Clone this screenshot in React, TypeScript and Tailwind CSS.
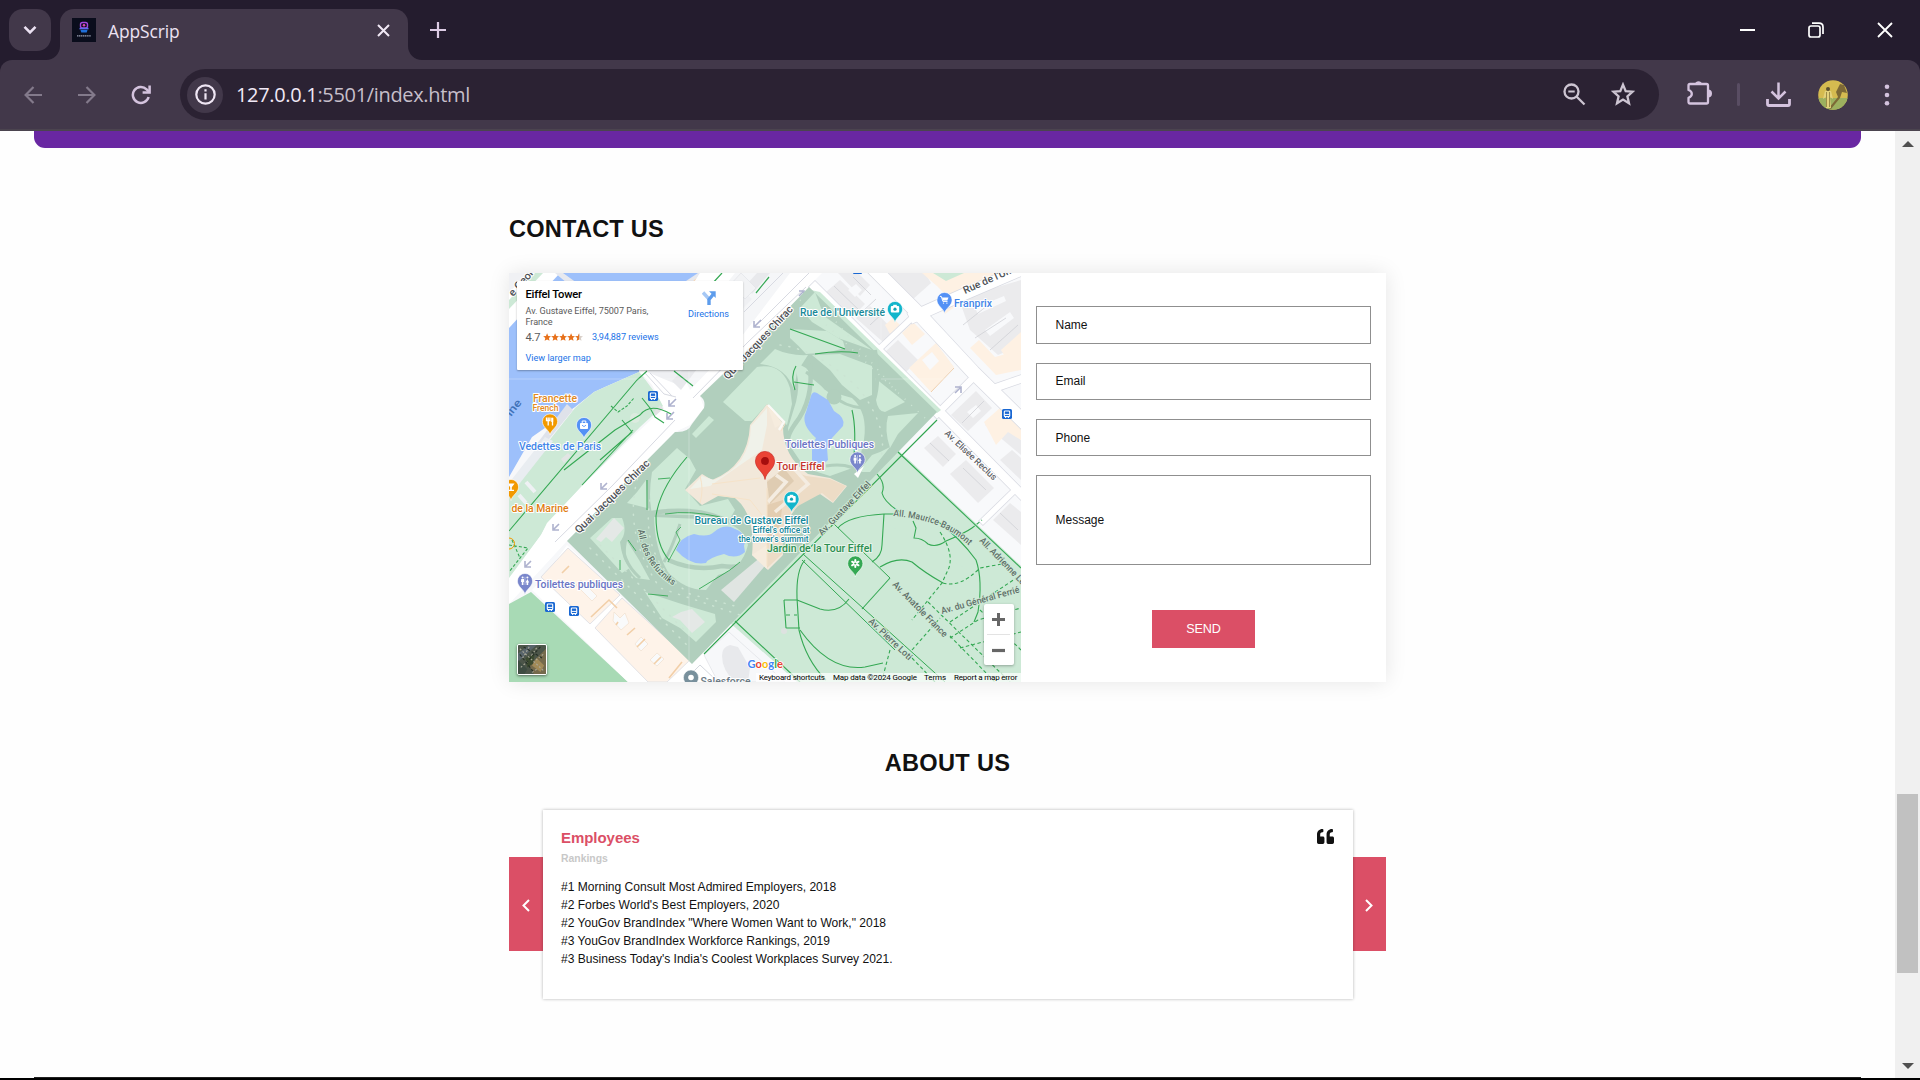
import React from "react";
import { FaQuoteLeft } from "react-icons/fa";

/* ---------- Browser chrome ---------- */

function TabStrip() {
  return (
    <div className="relative flex h-[60px] w-full items-start bg-[#241c2e]">
      <button className="ml-[9px] mt-[9px] flex h-[42px] w-[42px] items-center justify-center rounded-[14px] bg-[#42384a]">
        <svg width="14" height="10" viewBox="0 0 14 10" fill="none" stroke="#ece2f3" strokeWidth="2.6">
          <path d="M1.5 1.8 L7 7.3 L12.5 1.8" />
        </svg>
      </button>
      <div className="relative ml-[9px] mt-[9px] flex h-[51px] w-[348px] items-start rounded-t-[14px] bg-[#42384a]">
        <svg className="absolute -left-[14px] bottom-0" width="14" height="14" viewBox="0 0 14 14">
          <path d="M14 0 V14 H0 A14 14 0 0 0 14 0Z" fill="#42384a" />
        </svg>
        <svg className="absolute -right-[14px] bottom-0" width="14" height="14" viewBox="0 0 14 14">
          <path d="M0 0 V14 H14 A14 14 0 0 1 0 0Z" fill="#42384a" />
        </svg>
        <svg className="ml-3 mt-[9px]" width="24" height="24" viewBox="0 0 24 24">
          <rect width="24" height="24" fill="#0a0d1c" />
          <rect x="8.5" y="4.5" width="7" height="5.5" rx="2" fill="none" stroke="#a546e0" strokeWidth="1.4" />
          <circle cx="12" cy="7.3" r="1.3" fill="#e04bb4" />
          <path d="M7.5 10.6 H16.5" stroke="#5a6cf0" strokeWidth="1.6" />
          <path d="M8.5 12 L9.3 14.6 H14.7 L15.5 12Z" fill="#1f6fd8" />
          <path d="M5 17.8 H19" stroke="#9ba1b3" strokeWidth="1.2" strokeDasharray="1.4 0.5" />
        </svg>
        <span className="ml-3 mt-[9px] font-['Open_Sans','Noto_Sans',sans-serif] text-[17.4px] leading-[26px] tracking-[-0.1px] text-[#ece2f3]">
          AppScrip
        </span>
        <svg className="ml-auto mr-[18px] mt-[15px]" width="13" height="13" viewBox="0 0 13 13" stroke="#f0e8f5" strokeWidth="2">
          <path d="M1 1 L12 12 M12 1 L1 12" />
        </svg>
      </div>
      <svg className="ml-[22px] mt-[22px]" width="16" height="16" viewBox="0 0 16 16" stroke="#dccbe4" strokeWidth="2.2">
        <path d="M8 0 V16 M0 8 H16" />
      </svg>
      <div className="ml-auto flex h-[60px] items-center pr-[27px]">
        <svg width="15" height="15" viewBox="0 0 15 15" stroke="#fff" strokeWidth="2">
          <path d="M0 7 H15" />
        </svg>
        <svg className="ml-[53px]" width="16" height="16" viewBox="0 0 16 16" fill="none" stroke="#fff" strokeWidth="1.7">
          <rect x="1" y="4" width="11" height="11" rx="2" />
          <path d="M4 1.2 H11 Q15 1.2 15 5 V12" />
        </svg>
        <svg className="ml-[53px]" width="16" height="16" viewBox="0 0 16 16" stroke="#fff" strokeWidth="1.8">
          <path d="M1 1 L15 15 M15 1 L1 15" />
        </svg>
      </div>
    </div>
  );
}

function Toolbar() {
  return (
    <div className="h-[71px] w-full bg-[#241c2e]">
      <div className="flex h-[71px] w-full items-start rounded-t-[12px] border-b-2 border-[#4b444f] bg-[#42384a] pt-[9px]">
        <div className="flex h-[51px] w-[180px] items-center pl-6">
          <svg width="18" height="18" viewBox="0 0 18 18" fill="none" stroke="#837a8b" strokeWidth="2.2">
            <path d="M18 9 H2 M9.5 1 L1.6 9 L9.5 17" />
          </svg>
          <svg className="ml-9" width="18" height="18" viewBox="0 0 18 18" fill="none" stroke="#837a8b" strokeWidth="2.2">
            <path d="M0 9 H16 M8.5 1 L16.4 9 L8.5 17" />
          </svg>
          <svg className="ml-[35px]" width="20" height="20" viewBox="0 0 20 20" fill="none" stroke="#d4c3de" strokeWidth="2.5">
            <path d="M17.6 12 A8 8 0 1 1 15.6 4.3 L18.3 7" />
            <path d="M18.6 0.6 V7.6 H11.6" />
          </svg>
        </div>
        <div className="flex h-[51px] w-[1479px] items-center rounded-full bg-[#2b2233]">
          <span className="ml-[7px] flex h-9 w-9 items-center justify-center rounded-full bg-[#42384a]">
            <svg width="21" height="21" viewBox="0 0 21 21" fill="none" stroke="#efe6f4" strokeWidth="2.2">
              <circle cx="10.5" cy="10.5" r="9.2" />
              <path d="M10.5 9.2 V15.5 M10.5 5.3 V7.5" />
            </svg>
          </span>
          <span className="ml-[13px] font-['Open_Sans','Noto_Sans',sans-serif] text-[20px] leading-[28px] tracking-[-0.33px] text-[#c6bfca]">
            <span className="text-[#f1e9f6]">127.0.0.1</span>:5501/index.html
          </span>
          <svg className="ml-auto" width="23" height="23" viewBox="0 0 23 23" fill="none" stroke="#cdc5d2" strokeWidth="2.3">
            <circle cx="8.5" cy="8.5" r="7" />
            <path d="M13.5 13.5 L21.5 21.5" />
            <path d="M5.3 8.5 H11.7" strokeWidth="2" />
          </svg>
          <svg className="-mt-px mr-6 ml-[25px]" width="24" height="24" viewBox="0 0 24 24" fill="none" stroke="#cdc5d2" strokeWidth="2.3">
            <path d="M12 2.6 L14.7 9.1 L21.6 9.7 L16.4 14.3 L18 21.2 L12 17.5 L6 21.2 L7.6 14.3 L2.4 9.7 L9.3 9.1Z" />
          </svg>
        </div>
        <div className="flex h-[51px] flex-1 items-center">
          <svg className="-mt-1 ml-[27px]" width="27" height="26" viewBox="0 0 27 26" fill="none">
            <path
              d="M4 4 H20.5 Q22 4 22 5.5 V22 Q22 23.5 20.5 23.5 H4 Q2.5 23.5 2.5 22 V17.8 Q5.8 16.5 5.8 14 Q5.8 11 2.5 10 V5.5 Q2.5 4 4 4Z"
              stroke="#d4c3de"
              strokeWidth="2.3"
              strokeLinejoin="round"
            />
            <path d="M9 4 A3.6 3.6 0 0 1 16 4Z M22 9.5 A4 4 0 0 1 22 17.5Z" fill="#d4c3de" />
          </svg>
          <span className="ml-[24px] h-[23px] w-[3px] rounded bg-[#594d63]" />
          <svg className="ml-[26px]" width="25" height="25" viewBox="0 0 25 25" fill="none" stroke="#d4c3de" strokeWidth="2.5">
            <path d="M12.5 0.5 V16 M5.5 9.5 L12.5 16.5 L19.5 9.5" />
            <path d="M1.5 17 V22 Q1.5 23.5 3 23.5 H22 Q23.5 23.5 23.5 22 V17" strokeWidth="2.8" />
          </svg>
          <Avatar />
          <svg className="ml-[36px]" width="6" height="22" viewBox="0 0 6 22" fill="#d4c3de">
            <circle cx="3" cy="2.8" r="2.3" />
            <circle cx="3" cy="11" r="2.3" />
            <circle cx="3" cy="19.2" r="2.3" />
          </svg>
        </div>
      </div>
    </div>
  );
}

function Avatar() {
  return (
    <svg className="ml-[27px]" width="30" height="30" viewBox="0 0 30 30">
      <defs>
        <clipPath id="avatar">
          <circle cx="15" cy="15" r="14.8" />
        </clipPath>
      </defs>
      <g clipPath="url(#avatar)">
        <rect width="30" height="30" fill="#d5bb50" />
        <rect y="18" width="30" height="12" fill="#9cb05f" />
        <path d="M18 12 L22 4 L26 5 L29 13 L24 12 L22 18 L13 29 L11 28 L20 17Z" fill="#7d6936" />
        <circle cx="10" cy="9" r="2" fill="#5b5030" />
        <path d="M7 11 H13 L15 19 L12 17 L13 28 H8 L8 17 L5 19Z" fill="#e3d27c" />
        <path d="M8.5 12 V27 M11.5 12 V27" stroke="#8a7a3a" strokeWidth="0.8" />
      </g>
    </svg>
  );
}

/* ---------- Map ---------- */

type PinProps = { x: number; y: number; color: string; kind: string };

function PinGlyph({ kind }: { kind: string }) {
  switch (kind) {
    case "camera":
      return (
        <g>
          <rect x="-4.2" y="-3" width="8.4" height="6.6" rx="1" fill="#fff" />
          <rect x="-1.8" y="-4.2" width="3.6" height="2" fill="#fff" />
          <circle r="1.6" cy="0.2" fill="#12a4b5" />
        </g>
      );
    case "cart":
      return (
        <g fill="#fff" stroke="#fff">
          <path d="M-4.6 -3.6 H-3.2 L-1.6 1.4 H3" fill="none" strokeWidth="1" />
          <path d="M-2.6 -2.6 H4 L2.8 0.6 H-1.6Z" stroke="none" />
          <circle cx="-1" cy="3.1" r="0.7" stroke="none" />
          <circle cx="2.4" cy="3.1" r="0.7" stroke="none" />
        </g>
      );
    case "wc":
      return (
        <g fill="#fff">
          <circle cx="-2.4" cy="-3.4" r="1" />
          <circle cx="2.4" cy="-3.4" r="1" />
          <path d="M-3.8 -2 H-1 L-0.9 1 H-1.6 V4 H-3.2 V1 H-4Z M2.4 -2 L4.2 1.6 H3.2 V4 H1.6 V1.6 H0.6Z" />
          <path d="M-0.2 -4.2 H0.2 V4 H-0.2Z" />
        </g>
      );
    case "food":
      return (
        <g stroke="#fff" fill="none" strokeWidth="1.3">
          <path d="M-1.8 -4 V4 M-3.5 -4 V-1 H-0.1 V-4 M2.5 4 V-3.6" />
          <path d="M2.2 -3.8 V0.4" strokeWidth="2" />
        </g>
      );
    case "bag":
      return (
        <g>
          <rect x="-4" y="-2" width="8" height="6" rx="0.8" fill="#fff" />
          <path d="M-1.8 -2 V-4 H1.8 V-2" fill="none" stroke="#fff" />
          <path d="M-2 0.2 Q0 3 2 0.2" fill="none" stroke="#4285f4" strokeWidth="0.8" />
        </g>
      );
    case "bar":
      return <path d="M-3.6 -3.6 H3.6 L0.8 0.2 V2.8 H3 V4 H-3 V2.8 H-0.8 V0.2Z" fill="#fff" />;
    case "flower":
      return (
        <g stroke="#fff" strokeWidth="2" strokeLinecap="round">
          <path d="M0 -1.8 V-3.6 M0 1.8 V3.6 M-1.6 -0.9 L-3.2 -1.8 M1.6 0.9 L3.2 1.8 M1.6 -0.9 L3.2 -1.8 M-1.6 0.9 L-3.2 1.8" />
        </g>
      );
    default:
      return <circle r="2.8" fill="#fff" />;
  }
}

function Pin({ x, y, color, kind }: PinProps) {
  return (
    <g transform={`translate(${x} ${y})`}>
      <path d="M0 13.5 C-1 8 -7.6 6 -7.6 0 A7.6 7.6 0 0 1 7.6 0 C7.6 6 1 8 0 13.5Z" fill={color} stroke="#fff" strokeWidth="0.6" />
      <PinGlyph kind={kind} />
    </g>
  );
}

function BusStop({ x, y }: { x: number; y: number }) {
  return (
    <g transform={`translate(${x} ${y})`}>
      <rect x="-5" y="-5" width="10" height="10" rx="1.6" fill="#1967d2" />
      <rect x="-2.7" y="-3" width="5.4" height="5.6" rx="0.8" fill="none" stroke="#fff" strokeWidth="1.1" />
      <path d="M-2.6 0.4 H2.6 M-2 3.4 H-1 M1 3.4 H2" stroke="#fff" strokeWidth="1" />
    </g>
  );
}

type LabelProps = {
  x: number;
  y: number;
  w: number;
  color: string;
  size?: number;
  rotate?: number;
  halo?: string;
  children: string;
};

function Label({ x, y, w, color, size = 10.2, rotate = 0, halo = "#ffffff", children }: LabelProps) {
  return (
    <text
      transform={`translate(${x} ${y}) rotate(${rotate})`}
      textLength={w}
      lengthAdjust="spacingAndGlyphs"
      fontSize={size}
      fill={color}
      stroke={halo}
      strokeWidth="2"
      strokeLinejoin="round"
      paintOrder="stroke"
      fontWeight="500"
    >
      {children}
    </text>
  );
}

function MapDrawing() {
  return (
    <svg className="block h-[409px] w-[512px] font-['Roboto',sans-serif]" viewBox="509 273 512 409">
      <rect x="509" y="273" width="512" height="409" fill="#f7f8fa" />

      {/* River and its far bank */}
      <path d="M509 273 H700 L639 372 L605 387 L594 392 L575 407 L532 437 L509 477Z" fill="#9dc0fb" />
      <path d="M509 273 H560 L509 328Z" fill="#fff" />
      <path d="M535 273 H543 L509 309 V300Z" fill="#cde9d6" />
      <path d="M555 273 L567 283 H577 L563 273Z M686 281 L698 273 H712 L700 285Z" fill="#e7e9ef" />
      <path d="M694 281 L706 273" stroke="#f7dcc0" strokeWidth="2" />
      <path d="M509 273 L530 273 L509 292Z" fill="#f0f1f4" />

      {/* Riverside park */}
      <path d="M639 372 L605 387 L594 392 L575 408 L540 452 L509 492 V580 L541 535 L547 525 L582 486 L640 427 L664 405 L650 385Z" fill="#cde9d6" />
      <path d="M639 371 L700 273 H809 L812 290 L700 395 L664 405Z" fill="#f5f6f8" />
      <path d="M536 445 L567 404 L573 410 L541 449Z" fill="#dfe2ea" />
      <path d="M509 483 L545 437 L553 441 L509 497Z" fill="#e9edf1" />
      <path d="M526 482 L535 492 M519 495 L526 503" stroke="#eff1f4" strokeWidth="4" />
      <path d="M561 459 L568 453 L571 456 L564 463Z" fill="#e2e5e4" />
      <circle cx="635" cy="418" r="5" fill="#dcebdf" />
      <path d="M654 412 L660 405 L668 413 L659 424Z" fill="#e2e2e4" />

      {/* Quai Jacques Chirac */}
      <path
        d="M639 371 L700 273 H735 L672 352 L690 390 L742 336 L790 273 H826 L809 288 L700 396 L704 408 L690 425 L675 432 L567 541 L509 604 V578 L541 535 L547 523 L582 486 L640 430 L664 408 L652 385Z"
        fill="#ffffff"
      />
      <path d="M647 372 L672 350 L700 325 L742 290 L752 299 L700 352 L688 368 L676 384Z" fill="#eff0f3" />
      <path d="M672 381 L690 362 L697 369 L681 390Z M746 285 L757 273 H770 L752 294Z" fill="#e8e9ec" />
      <path d="M730 285 L745 299 L756 288 L741 273Z" fill="#f2f3f5" stroke="#dfe1e6" strokeWidth="0.6" />
      <g stroke="#d8dae2" strokeWidth="1" fill="none">
        <path d="M693 398 L748 342 L806 287" />
        <path d="M555 542 L612 486 L675 420" />
        <path d="M645 373 L664 394 L676 397 M650 373 L672 396" />
        <path d="M760 322 L809 273 M744 312 L783 273" />
      </g>
      <g fill="none" stroke="#aeb2ce" strokeWidth="1.6">
        <path d="M676 399 L670 405 M669 400 V406 H675" />
        <path d="M674 412 L668 418 M667 413 V419 H673" />
        <path d="M607 483 L602 488 M601 483 V489 H607" />
        <path d="M559 524 L554 529 M553 524 V530 H559" />
        <path d="M531 561 L526 566 M525 561 V567 H531" />
        <path d="M761 320 L755 326 M754 321 V327 H760" />
        <path d="M799 296 L803 292 M799 291 H804 V296" />
      </g>

      {/* Champ de Mars lawn */}
      <path d="M898 450 L905 456 L1021 566 V682 H797 L729 622 L703 653 L692 640Z" fill="#cde9d6" />
      {/* Lower-left lawn and housing blocks */}
      <path d="M509 604 L531 592 L628 682 H509Z" fill="#a8dab5" />
      <path d="M532 590 L543 578 L567 545 L692 664 L704 655 L735 682 H628Z" fill="#ffffff" />
      <path d="M568 548 L620 595 L590 624 L541 577Z" fill="#fef3e9" stroke="#dcdde3" strokeWidth="0.8" />
      <path d="M622 598 L690 660 L667 682 H648 L595 628Z" fill="#fef3e9" stroke="#dcdde3" strokeWidth="0.8" />
      <path d="M576 585 L581 580 L597 596 L592 601Z M614 612 L620 618 L625 613 L629 623 L621 630 L613 621Z M635 644 L641 637 L648 644 L641 651Z M650 660 L657 653 L664 659 L657 666Z" fill="#f9fafb" stroke="#f0ddc9" strokeWidth="0.6" />
      <path d="M562 573 L569 566 M591 617 L609 600 L617 608 M616 625 L618 622 M627 635 L635 628 M637 647 L645 639 M654 664 L661 657 M669 678 L682 662" stroke="#f2cfa8" strokeWidth="1.6" fill="none" />
      <path d="M690 664 L704 652 L735 682 H672Z" fill="#fff" />
      <path d="M704 655 L729 632 L785 682 H718Z" fill="#f7f8fa" stroke="#dcdde3" strokeWidth="0.6" />
      <path d="M722 656 Q722 647 730 645 L738 647 L750 668 L748 682 H735 Q722 670 722 656Z" fill="#e8e9ec" />
      <path d="M690 675 L700 665 L716 680" fill="none" stroke="#d5d8de" strokeWidth="1" />

      {/* North-east blocks */}
      <path d="M809 286 L822 273 H1021 V566 L937 488 L898 450 L937 412Z" fill="#f8f9fb" />
      <g fill="#ebebed">
        <path d="M826 292 L840 280 L865 304 L853 316 L846 309 L842 313Z" />
        <path d="M856 318 L870 306 L893 330 L883 342Z" />
        <path d="M838 273 H858 L870 285 L860 296Z" />
        <path d="M884 353 L898 340 L918 360 L904 374Z" />
        <path d="M886 273 H925 L931 283 L912 300Z" />
        <path d="M951 415 L976 391 L992 408 L968 431Z" />
        <path d="M985 425 L995 414 L1021 440 V455Z" />
        <path d="M924 448 L938 436 L956 454 L943 467Z" />
        <path d="M950 474 L966 460 L994 488 L978 503Z" />
        <path d="M993 520 L1010 503 L1021 512 V545Z" />
        <path d="M960 302 L987 290 L1021 280 V345 L998 355 L970 330Z" />
        <path d="M1000 460 L1012 450 L1021 458 V480Z" />
      </g>
      <g fill="#fef1e3">
        <path d="M885 325 L893 318 L900 325 L890 334Z" />
        <path d="M902 333 L913 322 L925 334 L912 345Z" />
        <path d="M909 368 L936 343 L954 367 L931 392Z" />
        <path d="M922 273 H1010 L990 284 L948 297 L937 286Z" />
        <path d="M938 306 L950 298 L956 306 L945 314Z" />
        <path d="M970 348 L979 340 L995 357 L1021 350 V370 L996 375Z" />
        <path d="M1001 350 L1021 332 V350 L1008 362Z" />
        <path d="M984 422 L1000 408 L1021 428 V440 L1008 432 L996 445Z" />
      </g>
      <path d="M933 273 H964 L946 281Z" fill="#cde9d6" />
      <path d="M922 360 L932 352 L939 361 L930 370Z M848 290 L856 284 L862 290 L855 297Z M967 412 L976 405 L981 411 L973 418Z M975 308 L1004 296 L1006 301 L978 314Z M985 330 L1010 312 L1014 318 L990 336Z" fill="#f8f9fb" />
      <g stroke="#cfd0d6" strokeWidth="0.8" fill="none">
        <path d="M834 286 L862 313 M853 277 L871 295 M862 312 L876 299 M870 325 L884 312 M963 325 L988 305 M975 338 L1006 318 M990 350 L1018 325 M962 423 L984 401 M963 468 L986 490 M1000 513 L1018 530 M930 443 L949 461" />
        <path d="M931 392 L954 368" stroke="#eec79d" />
      </g>
      <g stroke="#d8dae2" fill="none" strokeLinecap="square">
        <path d="M873 268 L920 315 L973 372 L1030 428" strokeWidth="15" />
        <path d="M915 316 L960 296 L1030 266" strokeWidth="13" />
        <path d="M815 287 L940 412 L1030 503" strokeWidth="10" />
        <path d="M937 414 L971 380" strokeWidth="8" />
        <path d="M992 389 L1030 376" strokeWidth="9" />
        <path d="M878 350 L912 318" strokeWidth="7" />
        <path d="M983 521 L1012 493" strokeWidth="7" />
      </g>
      <g stroke="#ffffff" fill="none" strokeLinecap="square">
        <path d="M873 268 L920 315 L973 372 L1030 428" strokeWidth="13.6" />
        <path d="M915 316 L960 296 L1030 266" strokeWidth="11.6" />
        <path d="M815 287 L940 412 L1030 503" strokeWidth="8.6" />
        <path d="M937 414 L971 380" strokeWidth="6.6" />
        <path d="M992 389 L1030 376" strokeWidth="7.6" />
        <path d="M878 350 L912 318" strokeWidth="5.6" />
        <path d="M983 521 L1012 493" strokeWidth="5.6" />
      </g>
      <path d="M955 393 L960 388 M955 387 H961 V393" fill="none" stroke="#aeb2ce" strokeWidth="1.6" />
      <rect x="853" y="270" width="9" height="4" rx="1" fill="#1967d2" />

      {/* Lawn edge over the avenue, then the tower gardens */}
      <path d="M898 452 L907 458 L1021 566 V600 L880 520Z" fill="#cde9d6" />
      <path d="M811 290 L820 292 L941 410 L937 413Z" fill="#cde9d6" />
      <path
        d="M809 287 L937 412 L692 664 L567 541 L675 432 Q688 433 692 424 L704 408 Q706 400 700 396 L742 356Z"
        fill="#b1cfbd"
      />
      <g fill="#cde9d6">
        <path d="M723 402 L757 367 Q782 362 790 388 L792 404 L787 425 L776 416 L767 404 L752 421 L745 421Z" />
        <path d="M790 329 L827 331 L843 341 L845 348 L830 352 L806 354 Q798 345 790 338Z" />
        <path d="M815 292 L824 316 L872 350 L838 338 L812 322 L800 308Z" />
        <path d="M760 364 L775 349 Q790 356 808 355 L797 372 L794 390 Q786 366 760 364Z" />
        <path d="M795 362 L806 368 L825 390 L852 398 Q868 412 864 440 L858 466 L830 476 L805 468 L790 446 L788 428 L796 402 Q800 385 797 375Z" />
        <path d="M812 355 L840 354 L872 366 L872 395 L860 400 L842 385 L830 370Z" />
        <path d="M875 378 L905 402 L885 412 Q878 412 876 400Z" />
        <path d="M888 416 L918 413 L898 434 L890 448 Q884 430 888 416Z" />
        <path d="M872 455 L880 452 L890 447 L870 472 L858 472Z" />
        <path d="M677 448 L690 459 L696 470 L685 489 L700 506 L728 499 L735 510 L728 522 L700 515 L652 514 Q648 496 652 472Z" />
        <path d="M646 480 L647 508 L627 503 Q638 492 646 480Z" />
        <path d="M590 538 L612 518 L622 518 Q628 532 620 542 Q622 560 630 568 L622 573Z" />
        <path d="M627 541 Q622 566 636 578 L650 580 Q640 560 627 541Z" />
        <path d="M654 517 L700 519 Q740 515 748 545 Q742 570 718 575 L706 590 Q684 590 668 572 Q655 550 654 517Z" />
        <path d="M645 592 Q680 604 715 614 L716 622 L696 642 L680 628 L662 618Z" />
      </g>
      <g fill="none" stroke="#b1cfbd" strokeWidth="4.5">
        <path d="M646 514 Q690 506 720 518 Q750 526 754 552 Q750 570 722 566 Q695 572 668 560" />
        <path d="M664 562 Q672 548 680 524" strokeWidth="3" />
        <path d="M810 364 Q814 400 795 424 Q784 440 790 446" />
        <path d="M806 372 Q825 386 834 396 Q844 406 862 408" strokeWidth="3" />
        <path d="M826 466 Q850 462 862 474" strokeWidth="3" />
        <path d="M875 350 Q880 380 874 400" strokeWidth="4" />
        <path d="M640 578 Q620 560 624 538" strokeWidth="3" />
      </g>
      <circle cx="834" cy="397" r="7.5" fill="#b1cfbd" />
      <path d="M692 434 L709 416 L714 420 L696 438Z" fill="#cde9d6" />
      <g fill="none" stroke="#cbe4d3" strokeWidth="1.5" strokeDasharray="1 8">
        <path d="M590 548 L690 648 M600 545 L694 640 M640 470 Q620 530 660 588 L740 615 M650 500 Q640 560 690 594 L735 606 M780 345 Q820 350 860 390 Q890 430 880 460" strokeLinecap="round" />
        <path d="M800 300 L925 418 M830 315 L900 395" />
      </g>
      <path d="M721 590 L762 556 L770 560 L734 602Z" fill="#e0e5e2" />
      <path d="M596 539 L614 518 L624 528 L612 542 L606 537 L601 542Z" fill="#e4e8e6" />
      <path d="M672 617 L681 612 L692 609 L705 622 L692 633 L680 620Z" fill="#e4e8e6" />

      {/* Ponds */}
      <path d="M676 550 Q680 537 694 534 Q708 538 714 532 Q725 523 735 529 Q748 534 744 546 L745 552 Q736 560 724 554 Q708 558 706 563 Q690 566 676 550Z" fill="#9dc0fb" />
      <path d="M811 396 Q813 389 820 395 L828 400 L834 411 Q846 418 843 426 L832 438 L827 448 L828 460 Q820 468 812 460 L812 446 L816 438 Q800 424 806 412Z" fill="#9dc0fb" />

      {/* Tower footprint */}
      <path d="M750 425 L767 404 L783 424 Q782 456 808 474 L830 478 L847 486 L833 503 L820 494 Q788 500 782 545 L783 555 L768 570 L752 555 Q756 515 735 498 L718 496 L702 505 L685 490 L702 474 L712 480 Q748 466 750 425Z" fill="#f2e8da" />
      <path d="M767 408 V425 L762 450 L710 486 L690 489 L702 476 L714 480 Q750 466 751 426Z" fill="#f0f2ea" />
      <path d="M767 480 V568 L782 554 Q784 515 798 506 L822 493 L833 502 L846 486 L830 479 L806 476 L790 470Z" fill="#eddcc6" />
      <path d="M767 482 L784 468 L794 481 L770 504Z" fill="#dfccb2" />
      <path d="M767 505 L783 500 L780 525 L767 545Z" fill="#e3cdb1" />
      <path d="M752 555 L767 545 V569Z M768 407 L783 423 L775 428Z" fill="#f6ecde" />
      <path d="M790 464 L808 484 L775 512 M776 475 L786 482 L768 502" fill="none" stroke="#f4ece1" strokeWidth="3.5" />
      <path d="M767 406 L785 424 L781 431 M700 476 Q704 489 700 503 M767 488 V566 M712 484 L760 478 M712 494 L750 500 L766 520" fill="none" stroke="#f6e3c9" strokeWidth="1" />
      <path d="M768 405 L784 422 L779 430" fill="none" stroke="#fbf9f6" strokeWidth="2.4" />
      <path d="M854 474 L864 466 L858 478Z" fill="#fff" />

      {/* Footpaths */}
      <g fill="none" stroke="#34a853" strokeWidth="1.1" strokeLinejoin="round">
        <path d="M704 654 L937 420" stroke="#2fa44e" />
        <path d="M898 452 L1021 568" />
        <path d="M735 621 L800 682" />
        <path d="M834 524 L890 578 M803 554 L945 682" strokeWidth="1" />
        <path d="M802 560 L895 650" strokeWidth="1" />
        <path d="M862 609 L890 578" />
        <path d="M838 528 Q848 516 884 514 H896" />
        <path d="M884 514 L882 545 Q882 556 872 562" />
        <path d="M877 474 Q886 484 882 493 Q884 502 900 512" />
        <path d="M880 567 Q898 556 912 562 Q925 573 943 583" />
        <path d="M805 560 Q796 570 797 598 L799 630 Q806 660 826 680" />
        <path d="M784 600 H797 L820 609 Q838 614 849 599 M784 600 L786 628 H800 M786 615 H790 M794 615 H797" />
        <path d="M800 630 Q830 672 865 667 L883 663" />
        <path d="M936 520 Q960 538 976 560 Q983 580 978 612 L974 622" />
        <path d="M913 521 L916 528 L914 538 Q922 538 928 544 Q936 548 946 541 Q965 533 972 528" />
        <path d="M687 457 Q660 488 656 516 Q656 545 669 560" />
        <path d="M658 479 L670 478 M665 514 Q690 510 720 517 M647 480 V510" strokeWidth="0.9" />
        <path d="M699 589 L730 570 L740 562 M648 594 L668 596 M628 540 L636 551 M620 560 V570" strokeWidth="0.9" />
        <path d="M852 410 Q857 430 853 466 M796 366 Q790 376 795 390 M794 382 L814 385 M790 329 L845 349 M815 354 Q840 350 858 353" />
        <path d="M668 562 L680 540 L676 532 L681 527" strokeWidth="0.8" />
        <path d="M647 371 L637 380 L509 531 M633 430 L582 485 M671 414 Q650 402 640 415 L615 430 L564 470 M664 423 L655 417 L650 408 L642 398 M622 420 L632 432 L600 460" />
        <path d="M611 406 L618 412 L627 406 L634 398" strokeDasharray="3 1.5" />
        <path d="M509 545 L528 548 L509 572 M512 540 L520 558" strokeDasharray="3 2" />
        <path d="M674 371 L693 386 M711 285 L722 273 M756 293 L769 277" strokeWidth="1.2" />
      </g>
      <g fill="none" stroke="#34a853" strokeWidth="1.1" strokeDasharray="3.5 2.5">
        <path d="M940 532 Q956 556 947 572 L942 583 L912 620" />
        <path d="M943 583 Q960 588 980 568 L1002 564" />
        <path d="M972 528 L982 520" />
        <path d="M928 602 L1010 682 M950 622 L1021 575 M912 650 L940 618 M960 648 L1021 632 M950 638 L978 620 L1021 608 M890 650 L882 680 M912 658 L935 682 M980 610 L1021 650 M950 636 L995 682" />
      </g>
      <circle cx="784" cy="631" r="3" fill="#dde2e0" />

      {/* Faint tile seams */}
      <path d="M689 371 V682 M881 273 V350 M509 379 H700 M881 379 H1021" stroke="#ffffff" strokeOpacity="0.35" strokeWidth="0.8" />

      {/* Street names */}
      <Label x={579} y={534} w={100} size={10.6} rotate={-44.5} color="#4d5156">Quai Jacques Chirac</Label>
      <Label x={728} y={380} w={96} size={10.6} rotate={-47} color="#4d5156">Quai Jacques Chirac</Label>
      <Label x={513} y={297} w={32} size={10.6} rotate={-48} color="#4d5156">e Geor</Label>
      <Label x={965} y={294} w={68} size={10.4} rotate={-24} color="#4d5156">Rue de l'Univer</Label>
      <Label x={944} y={434} w={68} size={9.2} rotate={43.5} color="#5f6368">Av. Elisée Reclus</Label>
      <Label x={822} y={536} w={71} size={9.2} rotate={-46} halo="#cde9d6" color="#5f6f68">Av. Gustave Eiffel</Label>
      <path id="baumont" d="M893 516 Q944 519 971 548" fill="none" />
      <path id="refuzniks" d="M638 530 Q643 568 677 588" fill="none" />
      <g fontSize="9.2" fontWeight="500" fill="#5f6f68" stroke="#cde9d6" strokeWidth="2" paintOrder="stroke">
        <text>
          <textPath href="#baumont" textLength="83" lengthAdjust="spacingAndGlyphs">All. Maurice Baumont</textPath>
        </text>
        <text>
          <textPath href="#refuzniks" textLength="68" lengthAdjust="spacingAndGlyphs">All. des Refuzniks</textPath>
        </text>
      </g>
      <Label x={979} y={541} w={66} size={9.2} rotate={46} halo="#cde9d6" color="#5f6f68">All. Adrienne Lec</Label>
      <Label x={892} y={585} w={74} size={9.2} rotate={45.5} halo="#cde9d6" color="#5f6f68">Av. Anatole France</Label>
      <Label x={868} y={622} w={56} size={9.2} rotate={43.5} halo="#cde9d6" color="#5f6f68">Av. Pierre Loti</Label>
      <Label x={942} y={614} w={81} size={9.2} rotate={-15.5} halo="#cde9d6" color="#5f6f68">Av. du Général Ferrié</Label>
      <Label x={511} y={417} w={18} size={11} rotate={-52} halo="#9dc0fb" color="#3f72b8">ine</Label>

      {/* Places */}
      <Pin x={895} y={309} color="#12b5cb" kind="camera" />
      <Pin x={944.5} y={300} color="#5491f5" kind="cart" />
      <Pin x={857.5} y={459.5} color="#7986cb" kind="wc" />
      <Pin x={791.5} y={499} color="#12b5cb" kind="camera" />
      <Pin x={855.3} y={563.5} color="#34a853" kind="flower" />
      <Pin x={550} y={421.5} color="#f29900" kind="food" />
      <Pin x={584} y={425} color="#5491f5" kind="bag" />
      <Pin x={511} y={487} color="#f29900" kind="bar" />
      <Pin x={525} y={581} color="#7986cb" kind="wc" />
      <Pin x={691} y={677.5} color="#78909c" kind="dot" />
      <BusStop x={653} y={396} />
      <BusStop x={1007} y={414} />
      <BusStop x={550} y={607} />
      <BusStop x={574} y={611} />
      <g transform="translate(765 461)">
        <path d="M0 18.5 C-1 11 -9.6 8 -9.6 0 A9.6 9.6 0 0 1 9.6 0 C9.6 8 1 11 0 18.5Z" fill="#ea4335" stroke="#c5221f" strokeWidth="0.6" />
        <circle r="3.9" fill="#a50e0e" />
      </g>
      <Label x={800} y={315.5} w={85} color="#1a8a99">Rue de l'Université</Label>
      <Label x={954} y={307} w={38} color="#4285e8">Franprix</Label>
      <Label x={785} y={448} w={89} color="#6a74c4">Toilettes Publiques</Label>
      <Label x={776.5} y={469.5} w={48} color="#c5362c">Tour Eiffel</Label>
      <Label x={694.5} y={524} w={114} color="#12869a">Bureau de Gustave Eiffel</Label>
      <Label x={752.5} y={533} w={57} size={8.6} color="#12869a">Eiffel's office at</Label>
      <Label x={738.5} y={541.5} w={70} size={8.6} color="#12869a">the tower's summit</Label>
      <Label x={767} y={552} w={105} halo="#e6f4ea" color="#2c8f50">Jardin de la Tour Eiffel</Label>
      <Label x={533} y={402} w={44} color="#e28a22">Francette</Label>
      <Label x={532.5} y={411} w={26} size={8.6} color="#e28a22">French</Label>
      <Label x={519} y={449.5} w={82} color="#4285e8">Vedettes de Paris</Label>
      <Label x={511.5} y={511.5} w={57} color="#e07d10">de la Marine</Label>
      <Label x={535} y={588} w={88} color="#6a74c4">Toilettes publiques</Label>
      <Label x={700.5} y={684.5} w={50} color="#6b7a84">Salesforce</Label>
      <path d="M509 538 A5 5 0 0 1 509 549" fill="none" stroke="#f29900" />

      {/* Wordmark */}
      <text x="747.5" y="667.5" fontSize="12" fontWeight="700" textLength="35.5" lengthAdjust="spacingAndGlyphs" stroke="#fff" strokeWidth="1.4" paintOrder="stroke" className="font-['Lato',sans-serif]">
        <tspan fill="#4285f4">G</tspan>
        <tspan fill="#ea4335">o</tspan>
        <tspan fill="#fbbc04">o</tspan>
        <tspan fill="#4285f4">g</tspan>
        <tspan fill="#34a853">l</tspan>
        <tspan fill="#ea4335">e</tspan>
      </text>
    </svg>
  );
}

function PlaceCard() {
  const star = "M5 0.4 L6.4 3.6 L9.8 3.9 L7.2 6.2 L8 9.6 L5 7.8 L2 9.6 L2.8 6.2 L0.2 3.9 L3.6 3.6Z";
  return (
    <div className="absolute left-2 top-2 flex h-[89px] w-[226px] rounded-[1px] bg-white font-['Roboto',sans-serif] shadow-[0_1px_2px_rgba(0,0,0,0.3)]">
      <div className="flex w-[148px] flex-col pl-[8.5px] pt-[6px]">
        <div className="text-[11.2px] font-medium leading-[15px] tracking-[-0.22px] text-black">Eiffel Tower</div>
        <div className="mt-[4px] whitespace-nowrap text-[9.1px] leading-[11px] tracking-[-0.05px] text-[#5b5b5b]">
          Av. Gustave Eiffel, 75007 Paris,
          <br />
          France
        </div>
        <div className="mt-[2px] flex h-[15px] items-center whitespace-nowrap">
          <span className="w-[17px] text-[11.2px] leading-[15px] tracking-[-0.2px] text-[#5b5b5b]">4.7</span>
          <span className="flex w-[49.5px]">
            {[0, 1, 2, 3, 4].map((i) => (
              <svg key={i} width="8.2" height="8.2" viewBox="0 0 10 10">
                <path d={star} fill={i === 4 ? "#d8cfc8" : "#e7711b"} />
                {i === 4 && <path d="M5 0.4 V7.8 L2 9.6 L2.8 6.2 L0.2 3.9 L3.6 3.6Z" fill="#e7711b" />}
              </svg>
            ))}
          </span>
          <span className="text-[9.1px] leading-[15px] tracking-[-0.03px] text-[#1a73e8]">3,94,887 reviews</span>
        </div>
        <div className="mt-[7px] text-[9.1px] leading-[12px] text-[#1a73e8]">View larger map</div>
      </div>
      <div className="ml-[16px] flex w-[55px] flex-col items-center pt-[10px]">
        <svg width="14" height="14" viewBox="0 0 14 14" fill="none">
          <path d="M1 1.5 L7 8 " stroke="#a6c8f5" strokeWidth="3.4" />
          <path d="M7 14 V8.5 L11.5 3" stroke="#5d9cec" strokeWidth="3.4" />
          <path d="M7 0.3 H13.7 V7Z" fill="#5d9cec" />
        </svg>
        <span className="mt-[3px] text-[9.1px] leading-[12px] text-[#1a73e8]">Directions</span>
      </div>
    </div>
  );
}

function MapPanel() {
  return (
    <div className="relative h-[409px] w-[512px] overflow-hidden">
      <MapDrawing />
      <PlaceCard />
      <svg className="absolute bottom-[7px] left-2 rounded-[2px] border border-white shadow-[0_1px_3px_rgba(0,0,0,0.5)]" width="30" height="31" viewBox="0 0 30 31">
        <rect width="30" height="31" fill="#4c5549" />
        <path d="M0 9 L12 0 H20 L0 18Z" fill="#59656b" />
        <path d="M30 4 V31 H17 L12 22Z" fill="#756a4c" />
        <path d="M0 16 L10 26 L7 31 H0Z" fill="#3e4c42" />
        <path d="M20 14 L28 22 L24 29 L15 22Z" fill="#a18a58" />
        <path d="M8 14 L18 10 L16 20 L10 24Z" fill="#3b4a2f" />
        <path d="M2 4 L28 28 M12 2 L5 14 M20 3 L14 12 M27 10 L18 17 M3 24 L12 16 M20 26 L14 30" stroke="#a8a797" strokeWidth="1.2" strokeDasharray="2 2" />
        <path d="M6 2 L26 14 M2 10 L16 28 M24 2 L8 20" stroke="#263027" strokeWidth="1.2" strokeDasharray="3 2" />
      </svg>
      <div className="absolute bottom-[17px] right-[7px] flex h-[61px] w-[30px] flex-col items-center rounded-[2px] bg-white pr-px shadow-[0_1px_3px_rgba(0,0,0,0.3)]">
        <span className="flex h-[30px] items-center">
          <svg width="13" height="13" viewBox="0 0 13 13" stroke="#666" strokeWidth="3">
            <path d="M6.5 0 V13 M0 6.5 H13" />
          </svg>
        </span>
        <span className="h-px w-[23px] bg-[#e3e3e3]" />
        <span className="flex h-[30px] items-center">
          <svg width="13" height="13" viewBox="0 0 13 13" stroke="#666" strokeWidth="3.2">
            <path d="M0 6.5 H13" />
          </svg>
        </span>
      </div>
      <div className="absolute bottom-0 right-0 flex h-[9px] items-center gap-[9px] whitespace-nowrap bg-white/70 pl-[3px] pr-1 font-['Roboto',sans-serif] text-[8px] leading-[9px] text-black">
        <span className="w-[65px] tracking-[-0.2px]">Keyboard shortcuts</span>
        <span className="w-[82px] tracking-[-0.16px]">Map data ©2024 Google</span>
        <span className="w-[21px] tracking-[-0.1px]">Terms</span>
        <span className="w-[63px] tracking-[-0.2px]">Report a map error</span>
      </div>
    </div>
  );
}

/* ---------- Page sections ---------- */

function ContactForm() {
  const field = "flex w-[335px] items-center border border-[#8f8f8f] bg-white pl-[18.5px] text-[12px] leading-none text-[#111]";
  return (
    <form className="flex h-[409px] w-[365px] flex-col items-center pt-[33px] font-['Liberation_Sans',Arial,sans-serif]">
      <div className={`${field} h-[38px]`}>Name</div>
      <div className={`${field} mt-[19px] h-[37px] pb-px`}>Email</div>
      <div className={`${field} mt-[19px] h-[37px]`}>Phone</div>
      <div className={`${field} mt-[19px] h-[90px]`}>Message</div>
      <button type="button" className="mt-[45px] h-[38px] w-[103px] bg-[#db4f66] text-[12.6px] tracking-[-0.15px] text-white">
        SEND
      </button>
    </form>
  );
}

const rankings = [
  "#1 Morning Consult Most Admired Employers, 2018",
  "#2 Forbes World's Best Employers, 2020",
  '#2 YouGov BrandIndex "Where Women Want to Work," 2018',
  "#3 YouGov BrandIndex Workforce Rankings, 2019",
  "#3 Business Today's India's Coolest Workplaces Survey 2021.",
];

function AboutSlider() {
  return (
    <div className="mt-8 flex items-start">
      <button className="mt-[47px] flex h-[94px] w-[34px] items-center justify-center bg-[#db4f66]">
        <svg className="mt-[2px]" width="8" height="13" viewBox="0 0 8 13" fill="none" stroke="#fff" strokeWidth="2">
          <path d="M7 1 L1.5 6.5 L7 12" />
        </svg>
      </button>
      <article className="relative h-[189px] w-[810px] bg-white pl-[18px] pt-[19px] shadow-[0_0_3px_rgba(0,0,0,0.3)]">
        <FaQuoteLeft className="absolute right-[19px] top-[18px] h-[17px] w-[17px] text-[#111]" />
        <h3 className="text-[15px] font-bold leading-[18px] tracking-[-0.05px] text-[#db4f66]">Employees</h3>
        <h4 className="mt-[6px] text-[10.4px] font-bold leading-[12px] text-[#c8c8c8]">Rankings</h4>
        <div className="mt-[13px] text-[12.05px] leading-[18px] text-[#111]">
          {rankings.map((line) => (
            <p key={line}>{line}</p>
          ))}
        </div>
      </article>
      <button className="mt-[47px] flex h-[94px] w-[33px] items-center justify-center bg-[#db4f66] pr-px">
        <svg className="mt-[2px]" width="8" height="13" viewBox="0 0 8 13" fill="none" stroke="#fff" strokeWidth="2">
          <path d="M1 1 L6.5 6.5 L1 12" />
        </svg>
      </button>
    </div>
  );
}

function ScrollBar() {
  return (
    <div className="flex h-full w-[25px] flex-col items-center bg-[#f0f0f0]">
      <svg className="mt-[10px]" width="12" height="6" viewBox="0 0 12 6">
        <path d="M0 6 L6 0 L12 6Z" fill="#505050" />
      </svg>
      <span className="mt-[647px] h-[179px] w-[21px] bg-[#c1c1c1]" />
      <svg className="mt-[90px]" width="12" height="6" viewBox="0 0 12 6">
        <path d="M0 0 L6 6 L12 0Z" fill="#505050" />
      </svg>
    </div>
  );
}

export default function App() {
  return (
    <div className="flex h-[1080px] w-[1920px] flex-col overflow-hidden bg-black">
      <TabStrip />
      <Toolbar />
      <div className="flex h-[947px] w-full">
        <main className="flex h-full w-[1895px] flex-col bg-[#fefefe] px-[34px] font-['Liberation_Sans',Arial,sans-serif]">
          <div className="h-[17px] w-full rounded-b-[11px] bg-[#6927a2]" />
          <section className="mx-auto w-[877px]">
            <h2 className="mt-[66px] text-[23.6px] font-bold leading-[30px] tracking-[0.2px] text-[#111]">CONTACT US</h2>
            <div className="mt-[29px] flex bg-white shadow-[0_0_20px_rgba(0,0,0,0.1)]">
              <MapPanel />
              <ContactForm />
            </div>
            <h2 className="mt-[66px] text-center text-[23.6px] font-bold leading-[30px] tracking-[0.3px] text-[#111]">ABOUT US</h2>
            <AboutSlider />
          </section>
          <div className="mt-auto h-px w-full bg-[#222]" />
        </main>
        <ScrollBar />
      </div>
    </div>
  );
}
